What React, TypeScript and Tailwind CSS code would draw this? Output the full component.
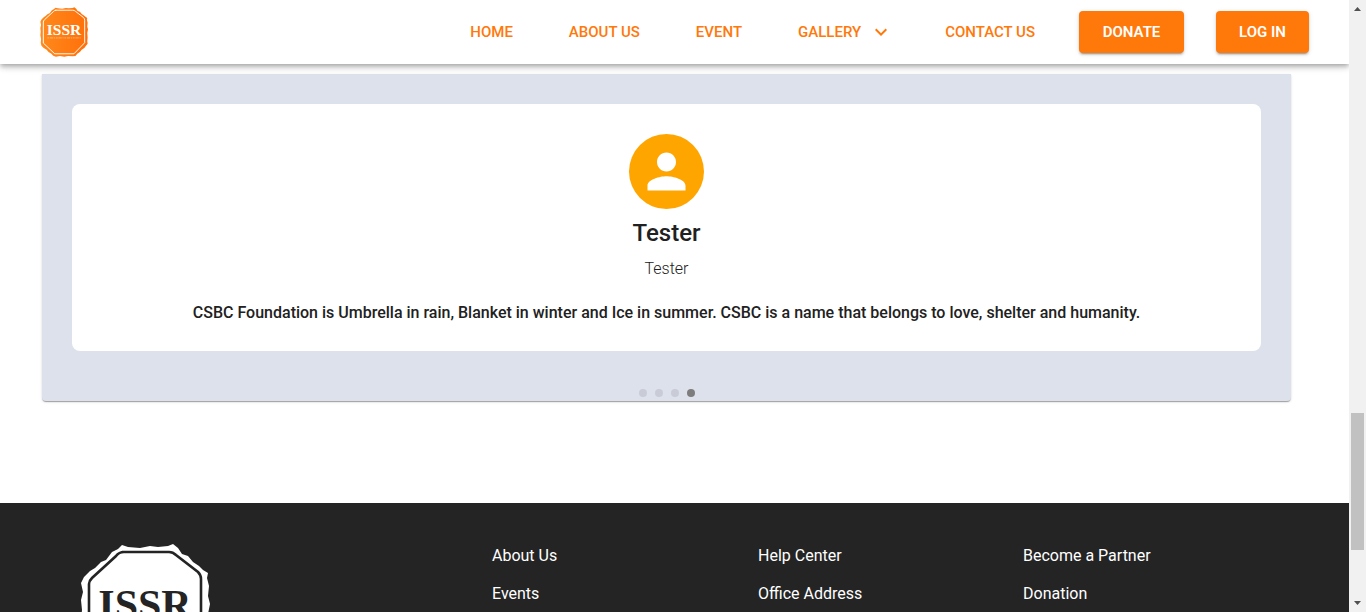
import React from "react";

const outline =
  "M42 1L48 3L60 4L70 2L78 3L88 2L93 0L98 4L102 10L108 12L113 18L119 22L123 26L128 29L127 34L129 42L128 52L130 60L128 70L129 82L128 92L129 99L124 105L120 110L113 115L108 121L101 126L96 132L88 133L76 132L66 134L54 132L43 134L36 131L30 125L23 121L18 115L10 110L4 104L2 97L3 86L1 76L2 66L1 56L3 48L1 39L4 33L10 27L15 24L21 18L26 16L32 8L38 5Z";

type LogoProps = {
  className: string;
  fill: string;
  ink: string;
  line: string;
  tagline?: boolean;
};

function Logo({ className, fill, ink, line, tagline }: LogoProps) {
  return (
    <svg viewBox="0 0 130 134" className={className} role="img" aria-label="ISSR">
      <defs>
        <linearGradient id="seal" x1="0" y1="0" x2="1" y2="0">
          <stop offset="0" stopColor="#ff8a1c" />
          <stop offset="1" stopColor="#ff6f0a" />
        </linearGradient>
      </defs>
      <path d={outline} fill={fill} />
      <path
        d="M42 8L89 8Q93 8 96 11L118 28Q121 31 121 35L121 96L92 126L40 126L9 97L9 40Q9 37 12 34L36 12Q39 8 44 8Z"
        fill="none"
        stroke={line}
        strokeWidth="2.6"
      />
      <text
        x="65"
        y="75"
        textAnchor="middle"
        fontFamily="'Liberation Serif', serif"
        fontWeight="700"
        fontSize="42"
        fill={ink}
      >
        ISSR
      </text>
      {tagline && (
        <path d="M20 83H110" stroke={line} strokeWidth="2" strokeDasharray="5 2 9 2 3 2" opacity="0.55" />
      )}
    </svg>
  );
}

const linkClass = "text-[15px] font-medium text-[#ff780a]";
const buttonClass =
  "h-[42px] rounded bg-[#ff780a] text-[15px] font-semibold text-white shadow-[0_3px_1px_-2px_rgba(0,0,0,0.2),0_2px_2px_0_rgba(0,0,0,0.14),0_1px_5px_0_rgba(0,0,0,0.12)]";
const footerColumns = [
  ["About Us", "Events"],
  ["Help Center", "Office Address"],
  ["Become a Partner", "Donation"],
];

export default function App() {
  return (
    <div className="flex h-screen overflow-hidden bg-white font-['Roboto',sans-serif] text-[#212121]">
      <div className="flex min-w-0 flex-1 flex-col overflow-hidden">
        <header className="z-10 flex h-16 shrink-0 items-center justify-between bg-white px-10 shadow-[0_2px_4px_-1px_rgba(0,0,0,0.2),0_4px_5px_0_rgba(0,0,0,0.14),0_1px_10px_0_rgba(0,0,0,0.12)]">
          <a href="#home">
            <Logo className="h-[50px] w-12" fill="url(#seal)" ink="#fff" line="#fff" tagline />
          </a>
          <div className="flex items-center gap-11">
            <nav className="flex items-center gap-14">
              <a href="#home" className={linkClass}>HOME</a>
              <a href="#about" className={linkClass}>ABOUT US</a>
              <a href="#event" className={linkClass}>EVENT</a>
              <button type="button" className="-mr-1 flex items-center gap-2 text-[15px] font-medium text-[#ff780a]">
                GALLERY
                <svg viewBox="0 0 24 24" className="size-6" fill="currentColor" aria-hidden="true">
                  <path d="M7.41 8.59 12 13.17l4.59-4.58L18 10l-6 6-6-6z" />
                </svg>
              </button>
              <a href="#contact" className={linkClass}>CONTACT US</a>
            </nav>
            <div className="flex gap-8">
              <button type="button" className={`w-[105px] ${buttonClass}`}>DONATE</button>
              <button type="button" className={`w-[93px] ${buttonClass}`}>LOG IN</button>
            </div>
          </div>
        </header>

        <main className="shrink-0 pt-[10px] pr-[58px] pb-[102px] pl-[42px]">
          <section className="rounded-b bg-[#dde1ec] px-[30px] pt-[30px] pb-1 shadow-[0_2px_1px_-1px_rgba(0,0,0,0.2),0_1px_1px_0_rgba(0,0,0,0.14),0_1px_3px_0_rgba(0,0,0,0.12)]">
            <article className="flex flex-col items-center rounded-lg bg-white px-8 pt-[30px] pb-[26px] text-center">
              <div className="flex size-[75px] items-center justify-center rounded-full bg-[#ffa500] text-white">
                <svg viewBox="0 0 24 24" className="size-[57px]" fill="currentColor" aria-hidden="true">
                  <path d="M12 12c2.21 0 4-1.79 4-4s-1.79-4-4-4-4 1.79-4 4 1.79 4 4 4zm0 2c-2.67 0-8 1.34-8 4v2h16v-2c0-2.66-5.33-4-8-4z" />
                </svg>
              </div>
              <h2 className="mt-2 text-2xl font-medium">Tester</h2>
              <p className="mt-2 text-base font-light">Tester</p>
              <p className="mt-5 text-base font-medium">
                CSBC Foundation is Umbrella in rain, Blanket in winter and Ice in summer. CSBC is a name that belongs to love, shelter and humanity.
              </p>
            </article>
            <div className="mt-[38px] flex justify-center gap-2">
              <button type="button" aria-label="Slide 1" className="size-2 rounded-full bg-[#c9ccd6]" />
              <button type="button" aria-label="Slide 2" className="size-2 rounded-full bg-[#c9ccd6]" />
              <button type="button" aria-label="Slide 3" className="size-2 rounded-full bg-[#c9ccd6]" />
              <button type="button" aria-label="Slide 4" className="size-2 rounded-full bg-[#7d7d7d]" />
            </div>
          </section>
        </main>

        <footer className="grid shrink-0 grid-cols-[412fr_266fr_265fr_266fr] bg-[#242424] py-[41px] pr-15 pl-20 text-white">
          <Logo className="h-[134px] w-[130px]" fill="#fff" ink="#242424" line="#242424" />
          {footerColumns.map((column) => (
            <ul key={column[0]} className="flex flex-col gap-[14px]">
              {column.map((label) => (
                <li key={label} className="text-base">
                  <a href="#footer">{label}</a>
                </li>
              ))}
            </ul>
          ))}
        </footer>
      </div>

      <div className="flex w-[17px] shrink-0 flex-col items-center bg-[#f1f1f1]" aria-hidden="true">
        <svg viewBox="0 0 17 17" className="size-[17px] shrink-0">
          <path d="M5 11L8.500 7L12 11Z" fill="#505050" />
        </svg>
        <div className="flex-[396]" />
        <div className="w-[13px] flex-[137] bg-[#c1c1c1]" />
        <div className="flex-[45]" />
        <svg viewBox="0 0 17 17" className="size-[17px] shrink-0">
          <path d="M5 6L8.500 10L12 6Z" fill="#505050" />
        </svg>
      </div>
    </div>
  );
}
